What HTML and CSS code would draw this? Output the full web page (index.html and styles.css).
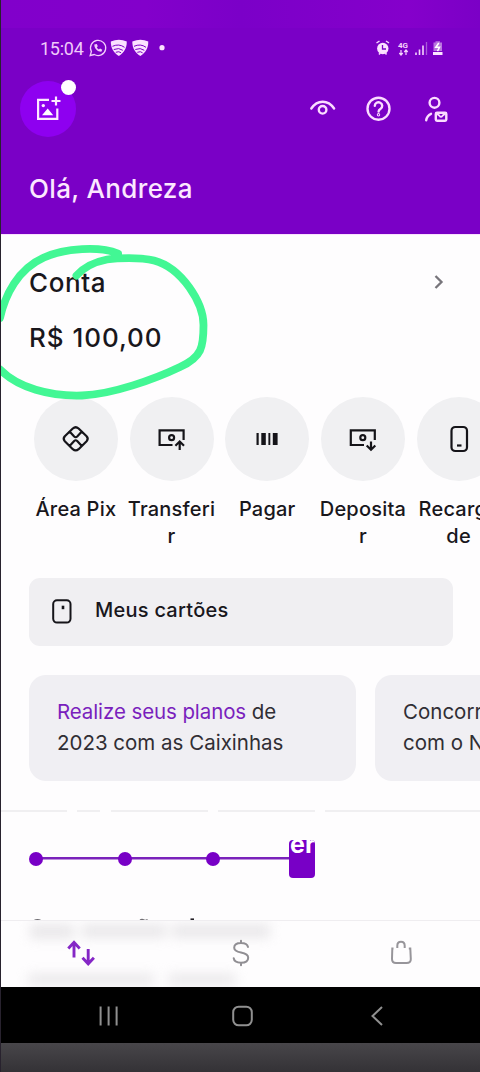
FILE: index.html
```html
<!DOCTYPE html>
<html lang="pt-BR">
<head>
<meta charset="utf-8">
<title>Conta</title>
<link rel="stylesheet" href="styles.css">
</head>
<body>
<div class="phone">
  <header class="header">
    <div class="header-strip"></div>
    <div class="status">
      <span class="clock">15:04</span>
      <svg class="st-left" width="80" height="20" viewBox="88 38 80 20" fill="none" stroke="#f3cdfb">
        <path d="M90.2 55.5l1.200-4A7.600 7.600 0 1 1 94.300 54.500z" stroke-width="1.300"/>
        <path d="M94.300 44.500c0 4 3 7.200 7 7.300l1-2-2.200-1.300-1.300 1c-1-.5-1.700-1.300-2-2.300l1-1-1-2.200z" fill="#f3cdfb" stroke="none"/>
        <g id="shield"><path d="M110.800 41.500q8.200-3.500 16 0c0 7-2.800 11-8 14.500-5.200-3.500-8-7.500-8-14.500z" fill="#fbe2ff" stroke="none"/>
        <path d="M112.500 46.300q6.500-3 12 1M113.800 49.500q5.200-2.200 9 .8M115.800 52.300q3.300-1.400 5.300.5" stroke="#7a00c6" stroke-width="1"/></g>
        <use href="#shield" x="21.500"/>
        <circle cx="162" cy="47.700" r="2.600" fill="#fbe2ff" stroke="none"/>
      </svg>
      <svg class="st-right" width="70" height="20" viewBox="375 38 70 20" fill="none" stroke="#f6d4fc">
        <circle cx="382.800" cy="48.500" r="5.700" fill="#fbe2ff" stroke="none"/>
        <path d="M376.500 43l3-2M389 43l-3-2M379 54.500l1.500-2M386.500 54.500l-1.500-2" stroke-width="1.500"/>
        <path d="M382.500 45v4h3.500" stroke="#7a00c6" stroke-width="1.300"/>
        <path d="M401 50v4.500M399.300 53l1.700 2 1.700-2M406 55v-4.500M404.300 52l1.700-2 1.700 2" stroke-width="1.200"/>
        <text x="398" y="47.500" class="net">4G</text>
        <path d="M416 52.500v2.500M419.500 49.500v5.500M423 45.500v9.500" stroke-width="1.600"/>
        <path d="M426.500 42v13" stroke="#a85bd8" stroke-width="1.300"/>
        <path d="M433.500 42.500h2v-1.200h4.500v1.200h2v8.500h-8.500z" fill="#b974df" stroke="none"/>
        <path d="M433 52h9.500v3h-9.500z" fill="#fbe2ff" stroke="none"/>
        <path d="M438.800 43l-3 4.300h3.700l-2 3.800" stroke="#fff" stroke-width="1.500"/>
      </svg>
    </div>
    <div class="toolbar">
      <div class="avatar">
        <svg width="26" height="26" viewBox="35 95 26 26" fill="none" stroke="#fde9ff" stroke-width="2.200">
          <path d="M49 98.800H38.100v19.100H57.300V107.500M51.500 100h9M56 95.500v9"/>
          <circle cx="43.300" cy="104.600" r="1.700" fill="#fde9ff" stroke="none"/>
          <path d="M42 114.300l5.700-6.800 5.500 6.800z" fill="#fff" stroke="none"/>
        </svg>
        <span class="avatar-dot"></span>
      </div>
      <div class="actions">
        <svg width="28" height="28" viewBox="309 95 28 28" fill="none" stroke="#fbdcff" stroke-width="2.400" stroke-linecap="round"><path d="M311.300 108.500q4.600-6.800 11.400-6.800t11.400 6.800"/><circle cx="322.600" cy="109.800" r="3.800"/></svg>
        <svg width="28" height="28" viewBox="365 95 28 28" fill="none" stroke="#fbdcff" stroke-width="2.400" stroke-linecap="round"><circle cx="378.500" cy="108.700" r="11"/><path d="M374.800 105.800a3.700 3.500 0 1 1 5.800 2.900q-2 1.200-2 2.900"/><circle cx="378.500" cy="114.700" r=".5"/></svg>
        <svg width="28" height="28" viewBox="421 95 28 28" fill="none" stroke="#fbdcff" stroke-width="2.400" stroke-linecap="round"><circle cx="434.500" cy="102.800" r="4.900"/><path d="M426.200 120.300q.7-4.700 4.800-6.500"/><rect x="435.800" y="112.800" width="10.500" height="8" rx="1.200"/><path d="M436.500 113.500l3 2.200q1.500 2.500 3 0l3-2.200" stroke-width="1.700"/></svg>
      </div>
    </div>
    <h1 class="hello"><span>Olá, Andreza</span></h1>
  </header>

  <main class="main">
    <section class="account">
      <div class="account-head"><h2 class="account-title"><span>Conta</span></h2>
        <svg class="chevron" width="12" height="18" viewBox="0 0 12 18" fill="none" stroke="#77757b" stroke-width="2.300"><path d="M2.500 3l6 6-6 6"/></svg>
      </div>
      <p class="balance"><span>R$ 100,00</span></p>
      <svg class="marker" width="220" height="170" viewBox="0 240 220 170" fill="none" stroke="#42f794" stroke-width="7.800" stroke-linecap="round"><path d="M118 253.500C100 246 65 248 44 257.500C18 269 5 295 0 318M0 369.500C18 388 50 396.500 82 395.500C112 394.500 155 379 180 367C202 357 203.500 347 203.500 325C203.500 303 182 268 154 260.500C140 257 117 258 107 259.500C94 262 84 267 76.500 275.500"/></svg>
    </section>

    <nav class="shortcuts">
      <div class="shortcut"><span class="bubble"><svg width="32" height="32" viewBox="60 423 32 32" fill="none" stroke="#151419" stroke-width="2.200" stroke-linejoin="round"><path d="M72.800 428.500q2.900-2.500 5.800 0l8 7.800q2.200 2.500 0 4.900l-8 8q-2.900 2.500-5.800 0l-8-8q-2.200-2.400 0-4.900z"/><path d="M68.500 432.500h2l3.700 4q1.500 1.500 3 0l3.700-4h2M68.500 445h2l3.700-4q1.500-1.500 3 0l3.700 4h2"/></svg></span><span class="label">Área Pix</span></div>
      <div class="shortcut"><span class="bubble"><svg width="32" height="32" viewBox="156 423 32 32" fill="none" stroke="#151419" stroke-width="2.200"><path d="M172.500 445H159.600V430.300H183.600V440"/><circle cx="171.600" cy="437.700" r="2.500"/><path d="M179.700 450v-8M175.400 445.700l4.300-4.200 4.300 4.200"/></svg></span><span class="label">Transferi<br>r</span></div>
      <div class="shortcut"><span class="bubble"><svg width="32" height="32" viewBox="251 423 32 32" fill="#151419"><path d="M256.500 433h2.200v12h-2.200zM261.300 433h4.500v12h-4.500zM268.400 433h1.900v12h-1.900zM272.800 433h4.800v12h-4.800z"/></svg></span><span class="label">Pagar</span></div>
      <div class="shortcut"><span class="bubble"><svg width="32" height="32" viewBox="347 423 32 32" fill="none" stroke="#151419" stroke-width="2.200"><path d="M364 445H350.800V430.300H374.800V440"/><circle cx="362.800" cy="437.700" r="2.500"/><path d="M371 441.500v8M366.700 445.500l4.300 4.200 4.300-4.200"/></svg></span><span class="label">Deposita<br>r</span></div>
      <div class="shortcut"><span class="bubble"><svg width="32" height="32" viewBox="442.500 423 32 32" fill="none" stroke="#151419" stroke-width="2.200"><rect x="451" y="427" width="15.500" height="24" rx="3.800"/><path d="M456.500 445.500h4.500"/></svg></span><span class="label">Recarga<br>de</span></div>
    </nav>

    <div class="my-cards">
      <svg width="22" height="26" viewBox="51 598 22 26" fill="none" stroke="#151419" stroke-width="2"><rect x="53.200" y="599.300" width="17.300" height="22.300" rx="3.800"/><path d="M63 604.700v3.500" stroke-width="2.600"/></svg>
      <span class="my-cards-text">Meus cartões</span>
    </div>

    <div class="offers">
      <article class="offer"><span class="row1"><b>Realize seus planos</b> de</span><br><span class="row2">2023 com as Caixinhas</span></article>
      <article class="offer"><span>Concorra</span><br><span>com o Nu</span></article>
    </div>

    <div class="divider"><i></i><i></i><i></i><i></i><i></i></div>

    <section class="timeline">
      <div class="track"><span class="node"></span><span class="node"></span><span class="node"></span><span class="chip"><span class="chip-text">er</span></span></div>
    </section>
    <div class="peek">
      <svg width="479" height="3" viewBox="1 917 479 3" fill="none" stroke="#706e73" stroke-width="1.300"><path d="M34 919.500q3.500-1.500 7 0M140 919q2-1.300 4 0t3.500-.5"/><path d="M190.500 918.500h3.500" stroke="#242128" stroke-width="2.200"/></svg>
    </div>
  </main>

  <nav class="tabs">
    <svg class="haze" width="479" height="67" viewBox="1 920 479 67"><g fill="#dcdadd"><rect x="30" y="924" width="44" height="15"/><rect x="82" y="924" width="84" height="14"/><rect x="172" y="924" width="98" height="14"/><rect x="28" y="974" width="126" height="11"/><rect x="168" y="974" width="68" height="11"/></g></svg>
    <div class="tab"><svg width="30" height="30" viewBox="66 938 30 30" fill="none" stroke="#8527c6" stroke-width="2.900"><path d="M74 957.500v-15M68.300 948.500l5.700-6.200 5.700 6.200M88.200 949v15M82.500 957.800l5.700 6 5.700-6"/></svg></div>
    <div class="tab"><svg width="24" height="30" viewBox="229 938 24 30" fill="none" stroke="#908e93" stroke-width="2" stroke-linecap="round"><path d="M248 947q-.8-4-7-4c-4.500 0-6.800 2-6.800 4.700 0 3 2.800 4 6.800 4.800 4.500.9 7.200 2 7.200 5.200 0 3-2.600 5-7.200 5-4.400 0-7-1.800-7.300-4.500M241 940.800v2.200M241 962.700v2.600"/></svg></div>
    <div class="tab"><svg width="26" height="30" viewBox="388 938 26 30" fill="none" stroke="#97959a" stroke-width="2"><path d="M397.300 948v-2.200q0-4 3.700-4t3.700 4v2.200M393.500 948.500h-1.200l-.3 10.500q0 4 4 4h10.500q4.500 0 4.300-4l-.5-10.500h-1.500"/></svg></div>
  </nav>
  <div class="system">
    <svg width="479" height="56" viewBox="1 987 479 56" fill="none" stroke="#909090" stroke-width="2"><path d="M100.600 1006.500v19M108.600 1006.500v19M116.600 1006.500v19M382 1007l-9.500 9 9.500 9"/><rect x="233.200" y="1006.700" width="18.600" height="18.600" rx="5.500"/></svg>
  </div>
  <footer class="under"></footer>
</div>
</body>
</html>
```
FILE: styles.css
```css
* { box-sizing: border-box; }
body { margin: 0; background: #2b2630; font-family: Inter, "Noto Sans", sans-serif; }
h1, h2, p { margin: 0; font-weight: 500; }
svg { display: block; flex: none; }
.phone { width: 480px; height: 1072px; overflow: hidden; display: flex; flex-direction: column; border-left: 1px solid #28222e; color: #19171c; }
.header { height: 234px; flex: none; background: #7a00c6; color: #fce8ff; }
.header-strip { height: 28px; background: linear-gradient(90deg, #8100cb, #8300cb 30%, #7b00c8 50%, #8500cb 85%, #7b00c6); }
.status { height: 40px; padding-left: 39px; padding-right: 35px; display: flex; align-items: center; }
.clock { font: 400 18px/20px Roboto, sans-serif; width: 48px; color: #f0cafa; letter-spacing: -.25px; padding-top: 1px; }
.st-right { margin-left: auto; }
.net { font: 700 8px Roboto, sans-serif; fill: #f6d4fc; stroke: none; }
.toolbar { height: 82px; display: flex; justify-content: space-between; align-items: center; padding: 0 31px 0 19px; }
.avatar { position: relative; width: 56px; height: 56px; border-radius: 50%; background: #8e00f0; display: flex; align-items: center; padding-left: 15px; }
.avatar-dot { position: absolute; left: 41px; top: -1px; width: 15px; height: 15px; border-radius: 50%; background: #fff; }
.actions { display: flex; gap: 28px; }
.hello { padding: 23px 0 0 28px; font-size: 26px; line-height: 32px; letter-spacing: .35px; }
.main { height: 686px; flex: none; background: #fefdfe; border-top: 1px solid #fae0ff; }
.account { position: relative; height: 162px; padding: 32px 35px 0 28px; }
.account-head { display: flex; justify-content: space-between; align-items: center; height: 32px; }
.account-title, .balance { font-size: 26px; line-height: 32px; letter-spacing: .6px; }
.chevron { margin-bottom: 2px; }
.balance { padding-top: 23px; letter-spacing: .95px; }
.marker { position: absolute; left: -1px; top: 5px; }
.shortcuts { display: flex; width: 479px; height: 181px; padding-left: 27px; overflow: hidden; }
.shortcut { width: 95.700px; flex: none; display: flex; flex-direction: column; align-items: center; gap: 15px; }
.bubble { width: 84px; height: 84px; border-radius: 50%; background: #f0f0f2; display: flex; align-items: center; justify-content: center; }
.label { font-size: 20px; font-weight: 500; line-height: 27px; letter-spacing: .2px; text-align: center; white-space: nowrap; }
.my-cards { margin-left: 28px; width: 424px; height: 68px; border-radius: 11px; background: #f0eff2; display: flex; align-items: center; padding: 0 22px; gap: 22px; }
.my-cards-text { font-size: 20px; font-weight: 500; padding-bottom: 5px; letter-spacing: .25px; }
.offers { display: flex; gap: 19px; width: 479px; overflow: hidden; padding: 29px 0 0 28px; }
.offer { width: 327px; height: 106px; flex: none; border-radius: 17px; background: #f0eff3; padding: 22px 28px; font-size: 20.500px; line-height: 30.500px; white-space: nowrap; color: #302e34; }
.offer b { font-weight: 400; color: #7a1fbd; }
.row1 { letter-spacing: -.1px; }
.divider { height: 2px; margin-top: 29px; display: grid; grid-template-columns: 66px 23px 97px 97px 155px; justify-content: space-between; }
.divider i { background: #f0eff1; }
.timeline { height: 106px; padding: 27px 0 0 28px; }
.track { display: flex; align-items: center; width: 286px; height: 39px; background: linear-gradient(#7a22bb, #7a22bb) 8px center / 265px 2.500px no-repeat; }
.node { width: 14px; height: 14px; flex: none; border-radius: 50%; background: #7800c6; }
.node + .node { margin-left: 74.500px; }
.chip { width: 26px; height: 38px; flex: none; border-radius: 4px; background: #7800c6; overflow: hidden; margin-left: 69px; }
.chip-text { display: block; color: #fff; font-weight: 700; font-size: 25px; line-height: 30px; margin-top: -11px; margin-left: 1px; white-space: nowrap; }
.peek { height: 3px; }
.tabs { position: relative; height: 67px; flex: none; background: #fefdfe; border-top: 1px solid #efedf0; display: grid; grid-template-columns: 160px 160px 159px; overflow: hidden; }
.haze { position: absolute; left: 0; top: -1px; filter: blur(6px); opacity: .6; }
.tab { position: relative; display: flex; justify-content: center; align-items: center; padding-bottom: 2px; }
.system { height: 56px; flex: none; background: #000; }
.under { height: 29px; flex: none; background: linear-gradient(#48464a, #343236); }
```
